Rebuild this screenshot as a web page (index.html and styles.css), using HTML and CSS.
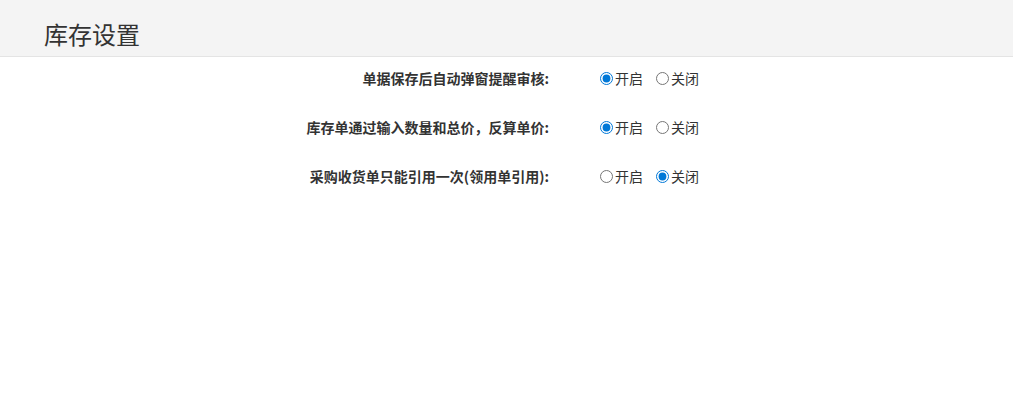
FILE: index.html
```html
<!DOCTYPE html>
<html lang="zh-CN">
<head>
    <meta charset="UTF-8">
    <title>库存设置</title>
    <link rel="stylesheet" href="styles.css">
</head>
<body>
    <header class="page-header">
        <h1>库存设置</h1>
    </header>

    <form class="settings">
        <div class="setting-row">
            <label class="setting-label">单据保存后自动弹窗提醒审核:</label>
            <div class="setting-options">
                <label class="option"><input type="radio" name="auditPopup" checked>开启</label>
                <label class="option"><input type="radio" name="auditPopup">关闭</label>
            </div>
        </div>
        <div class="setting-row">
            <label class="setting-label">库存单通过输入数量和总价，反算单价:</label>
            <div class="setting-options">
                <label class="option"><input type="radio" name="reversePrice" checked>开启</label>
                <label class="option"><input type="radio" name="reversePrice">关闭</label>
            </div>
        </div>
        <div class="setting-row">
            <label class="setting-label">采购收货单只能引用一次(领用单引用):</label>
            <div class="setting-options">
                <label class="option"><input type="radio" name="quoteOnce">开启</label>
                <label class="option"><input type="radio" name="quoteOnce" checked>关闭</label>
            </div>
        </div>
    </form>
</body>
</html>
```

FILE: styles.css
```css
/* General Styles */
body {
    margin: 0;
    padding: 0;
    font-family: "Noto Sans CJK SC", "Noto Sans", sans-serif;
    color: #333;
    background-color: #fff;
}

.page-header {
    height: 56px;
    background-color: #f4f4f4;
    border-bottom: 1px solid #e4e4e4;
    padding-left: 44px;
    display: flex;
    align-items: center;
}

.page-header h1 {
    margin: 0;
    padding-top: 10px;
    font-size: 24px;
    font-weight: normal;
    color: #333;
}

/* Settings form */
.settings {
    padding-top: 6px;
    display: flex;
    flex-direction: column;
    gap: 19px;
}

.setting-row {
    height: 30px;
    display: flex;
    align-items: center;
}

.setting-label {
    width: 549px;
    text-align: right;
    font-size: 14px;
    font-weight: bold;
    color: #333;
}

.setting-options {
    margin-left: 51px;
    display: flex;
    gap: 13px;
}

.option {
    display: flex;
    align-items: center;
    font-size: 14px;
    color: #333;
}

.option input {
    margin: 0 2px 0 0;
    width: 13px;
    height: 13px;
    accent-color: #0078d7;
}
```
